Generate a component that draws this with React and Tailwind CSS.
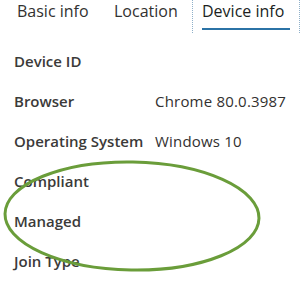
import React from "react";

const rows = [
  { label: "Device ID", value: "" },
  { label: "Browser", value: "Chrome 80.0.3987" },
  { label: "Operating System", value: "Windows 10" },
  { label: "Compliant", value: "" },
  { label: "Managed", value: "" },
  { label: "Join Type", value: "" },
];

const App = () => {
  return (
    <div
      className="relative w-[304px] h-[292px] overflow-hidden bg-white text-[#323130]"
      style={{ fontFamily: '"Open Sans", "Noto Sans", sans-serif' }}
    >
      {/* TABS */}
      <div className="flex pl-[8px] h-[42px]">
        <div className="w-[97px] h-[33px] pl-[9px] pb-[11px] flex items-center text-[16px]">
          Basic info
        </div>
        <div className="w-[87px] h-[33px] pl-[9px] pb-[11px] flex items-center text-[16px]">
          Location
        </div>
        <div className="relative w-[108px] h-[33px] pl-[9px] pb-[11px] flex items-center text-[16px] font-medium text-[#201f1e] border-x border-dotted border-[#8fb0c9]">
          <span>Device info</span>
          <div className="absolute left-[9px] w-[88px] top-[28px] h-[2px] bg-[#2b73a6]" />
        </div>
      </div>

      {/* ROWS */}
      <div className="flex flex-col pl-[14px]">
        {rows.map((r) => (
          <div key={r.label} className="flex items-center h-[40px] text-[15px] -mt-[1px] mb-[1px]">
            <div className="w-[141px] font-semibold text-[#3b3a39]">{r.label}</div>
            <div className="text-[#323130] tracking-[0.2px]">{r.value}</div>
          </div>
        ))}
      </div>

      {/* HIGHLIGHT */}
      <svg className="absolute left-0 top-0 pointer-events-none" width="304" height="292">
        <ellipse
          cx="132"
          cy="216"
          rx="127"
          ry="54"
          fill="none"
          stroke="#6a9d3a"
          strokeWidth="3"
          transform="rotate(1 132 216)"
        />
      </svg>
    </div>
  );
};

export default App;
